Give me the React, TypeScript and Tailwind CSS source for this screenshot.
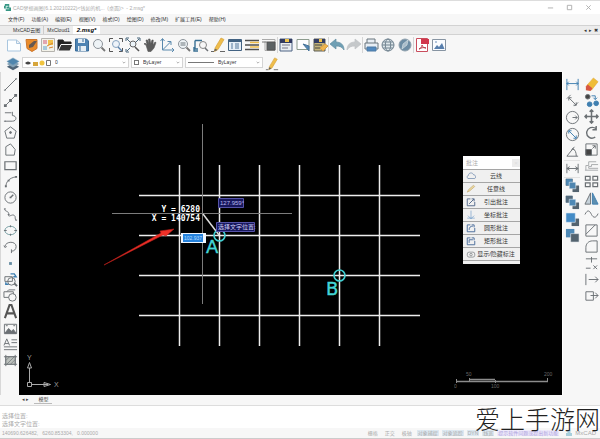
import React from "react";

type Icon = { name: string; art: React.ReactNode; sep?: boolean };

const G = "#6b7074";
const B = "#3f7fb0";

function Glyph({ children, size = "size-4" }: { children: React.ReactNode; size?: string }) {
  return (
    <svg viewBox="0 0 16 16" className={`${size} shrink-0`} fill="none" stroke={G} strokeWidth="1" aria-hidden="true">
      {children}
    </svg>
  );
}

const lens = (
  <>
    <circle cx="7" cy="7" r="4.500" fill="#eef3f6" stroke="#8b9299" />
    <path d="M10.500 10.500 14 14" stroke="#777" strokeWidth="1.800" />
  </>
);

const topIcons: Icon[] = [
  { name: "新建", art: <path d="M1.500 3h9l4 3.500V14h-13zM10.500 3v3.500h4" fill="#fcfeff" stroke="#a9c6df" /> },
  { name: "导入", art: <><path d="M3 2.500h11v9l-5 3-5-3z" fill="#e98b2a" stroke="#cd762c" /><path d="m6 8 5-4 3 0-4 6-4 1z" fill="#655850" stroke="none" /></> },
  { name: "云图", art: <><path d="M1.500 1.500h13v13h-13z" fill="#f3f2e9" stroke="#b5b3ae" /><path d="M3 3h4v4H3z" fill="#e2a6b0" stroke="none" /><path d="M8 3h5v5H8z" fill="#f2c14c" stroke="none" /><path d="M3 9h4v4H3z" fill="#a6c9dc" stroke="none" /><path d="m7 9 6-3M9 11l4-1" stroke="#d9872e" /></> },
  { name: "打开", art: <><path d="M1 13.500V3h5l1 2h7v3" fill="#222" stroke="#222" /><path d="M1 14 4 7.500h12L13 14z" fill="#333" stroke="#f7f7f7" /></> },
  { name: "保存", art: <><path d="M1.500 2h11l2 2v10h-13z" fill="#4d83b3" stroke="#396b98" /><path d="M4 2h7v4H4zM4 9h8v5H4z" fill="#e5eef5" stroke="none" /><path d="M6 9v5M9 2v3" stroke="#396b98" /></> },
  { name: "缩放", art: lens },
  { name: "窗口缩放", art: <><path d="M1.500 5V1.500H5M11 1.500h3.500V5M14.500 11v3.500H11M5 14.500H1.500V11" stroke="#555" /><circle cx="8" cy="7" r="3.500" stroke="#87a3c0" fill="#edf3fa" /><path d="m10 10 4 4" stroke="#5980ab" strokeWidth="1.500" /></> },
  { name: "范围缩放", art: <><path d="m2 2 3 3M14 2l-3 3M2 14l3-3M1 4V1h3M12 1h3v3M1 12v3h3" stroke="#48677c" /><circle cx="8" cy="7" r="3" fill="#edf5fa" stroke="#666" /><path d="m10 10 4 4" stroke="#555" strokeWidth="1.600" /></> },
  { name: "平移", art: <path d="M4 8 2 7l1-1 2 2L4 3h1.500L7 7l-.5-5H8l.7 5L10 3h1.200l-.2 5 2-3 1 .6-2 5.400-3 3.500H6z" fill="#5c5c5c" stroke="#555" strokeWidth=".6" /> },
  { name: "坐标", art: <path d="M3.500 2v11H15M3.500 13l8-8M1.500 4l2-2.500L5.500 4M13 11l2 2-2 2M8.500 4.500h3.500V8" stroke="#5a89ad" /> },
  { name: "实时缩放", art: <>{lens}<path d="M4.500 6h5M4.500 8h5" stroke="#6c777c" /></> },
  { name: "查找", art: <><path d="M2 3.500h7M2 3.500V12h3M1 10v4h4" stroke="#397094" strokeWidth="1.400" /><circle cx="10" cy="8" r="3.500" stroke="#888" /><path d="m12 11 3 3" strokeWidth="1.500" /></> },
  { name: "编辑", art: <><path d="m5 11 6-10 3 1.500-6 10-3.500 2z" fill="#efbd4b" stroke="#d5a23c" strokeWidth=".7" /><path d="m4.500 14 .5-2 2 1z" fill="#555" stroke="#666" strokeWidth=".5" /><path d="M1 14.500h3M10 14.500h5" stroke="#666" /></> },
  { name: "表格", art: <><path d="M1.500 2.500h13v11h-13z" fill="#e7eff8" stroke="#426282" /><path d="M2 4h12" stroke="#426282" strokeWidth="2" /><path d="M4 7h2M8 7h4M4 9h2M8 9h4M4 11h2M8 11h4" stroke="#55789c" /></> },
  { name: "线型", art: <><path d="M1 3.500h14M1 8h14M1 12.500h14" stroke="#4f4f4f" strokeWidth="1.400" /><path d="M6 5.500h9M6 10h9" stroke="#efbd4b" strokeWidth="1.500" /></> },
  { name: "图块", art: <><path d="M1 2.500h13v11H4v-9" stroke="#aaa" /><path d="M6 5h8v8H6z" fill="#5c6264" stroke="#555" /><path d="M1 5h5" stroke="#777" /></> },
  { name: "另存为", sep: true, art: <><path d="M2 2h12v12H2z" fill="#e9edf3" stroke="#4f6584" /><path d="M2 2h12v4H2z" fill="#333b61" stroke="none" /><path d="M7 2h4v3H7z" fill="#eec34d" stroke="none" /><path d="M4 8h8M4 11h6" stroke="#778" /></> },
  { name: "选择", art: <><path d="M2 2.500h12v10H2z" fill="#fff" stroke="#8c9b8d" /><path d="m8 7 6 7V9z" fill="#5388b4" stroke="#4a7599" /></> },
  { name: "批量", art: <><path d="M2 2h11v12H2z" fill="#c4b47b" stroke="#5e5e55" /><path d="M2 2h11v4H2z" fill="#343d63" stroke="none" /><path d="M7 2h3v3H7z" fill="#eec34d" stroke="none" /><path d="M3 8h7M3 11h6" stroke="#444" /><path d="m8 11 5-4 3 2-5 5z" fill="#f0b54d" stroke="#d29b48" /></> },
  { name: "撤销", sep: true, art: <path d="M1 7 7 2v3c5 0 8 3 8 8-2-3-4-4-8-4v3z" fill="#6f9fb4" stroke="#628ca0" strokeWidth=".7" /> },
  { name: "重做", art: <path d="M15 7 9 2v3c-5 0-8 3-8 8 2-3 4-4 8-4v3z" fill="#c5c8ca" stroke="#bfc2c4" strokeWidth=".7" /> },
  { name: "打印", sep: true, art: <><path d="M4 6V2h8v4M2 6h13v6H2z" fill="#e8eef4" stroke="#68747d" /><path d="M4 10h9v4H4z" fill="#5189bf" stroke="#4e7ba4" /></> },
  { name: "网络", art: <><circle cx="8" cy="8" r="6" fill="#dde6ea" stroke="#718390" /><ellipse cx="8" cy="8" rx="2.700" ry="6" stroke="#718390" /><path d="M2 8h12M3 5h10M3 11h10" stroke="#718390" /></> },
  { name: "导航", art: <><circle cx="8" cy="8" r="6" fill="#6d8da4" stroke="#91a2ae" /><path d="M5 12 6 7l5-4-1 5z" fill="#a9bdca" stroke="#dce5e9" strokeWidth=".6" /></> },
  { name: "PDF", sep: true, art: <><path d="M2.500 1.500h11v13h-11z" fill="#fff" stroke="#c94d5d" /><path d="M7 2h8v5H7z" fill="#d1364b" stroke="none" /><path d="M5 12c3-1 3-4 3-4 0 2 3 3 4 3-3-1-5 0-7 1Z" stroke="#b83c49" /></> },
  { name: "图片", art: <><path d="M1.500 2.500h13v11h-13z" fill="#fafcff" stroke="#8794a2" /><path d="m3 12 3-4 2 2 3-4 2.500 6z" fill="#587fad" stroke="none" /><circle cx="5" cy="5" r=".8" fill="#587fad" stroke="none" /></> },
];

const leftIcons: Icon[] = [
  { name: "直线", art: <path d="M2 14 14 2M1 14h2M13 2h2" /> },
  { name: "构造线", art: <><path d="M2 14 14 2" /><path d="M1 12h3v3H1zM6.500 6.500h3v3h-3zM12 1h3v3h-3z" fill={G} stroke="none" /></> },
  { name: "多段线", art: <path d="M2 4h7M2 13h8c5 0 5-6 0-6V3M1 13h2" /> },
  { name: "正多边形", art: <><path d="m8 2 6 4.500-2 7.500H4L2 6.500z" /><circle cx="8" cy="8" r="1" fill={G} /></> },
  { name: "多边形", art: <path d="M3 14V5l5-3 5 6-1 6z" /> },
  { name: "矩形", art: <path d="M2 4h12v8.500H2z" strokeWidth="1.300" /> },
  { name: "圆弧", art: <><path d="M3 14C3 8 7 4 14 3" /><path d="M2 12h2v2H2zM5 6h2v2H5zM13 2h2v2h-2z" fill={G} stroke="none" /></> },
  { name: "圆", art: <><circle cx="8" cy="8" r="6" /><path d="m8 8 3-3M7 8h2" strokeWidth="1.500" /></> },
  { name: "样条", art: <path d="M2 2c-1 3 5 2 4 6s4-1 6 1c2 1 0 4 2 5M1 2h2M5 8h2M13 14h2" /> },
  { name: "椭圆", art: <><ellipse cx="8" cy="8" rx="6" ry="4.500" stroke="#719a9f" /><path d="M1 8h3M12 8h3M8 2.500v2M8 11.500v2" /></> },
  { name: "椭圆弧", art: <path d="M2 8c1-6 12-6 12 0 0 3-2 5-5 5M1 7l1 2 2-1M9 11v4" /> },
  { name: "点", art: <path d="M6.500 6.500h3v3h-3z" fill="#638aa0" stroke="none" /> },
  { name: "插入块", art: <><path d="M2 5h8v5H2z" /><circle cx="9" cy="10" r="4" /><path d="M8 2h4l2 3h-3M3 11v2h3" stroke={B} strokeWidth="1.500" /><path d="m12 12 3 3" strokeWidth="2" /></> },
  { name: "创建块", art: <><path d="M1 4h10v6H1zM4 4l2-2h7" /><circle cx="10" cy="10" r="4" fill="#f7f7f7" /></> },
  { name: "文字", art: <path d="M2 15 7 1h2l5 14M4 10h8" strokeWidth="2.200" stroke="#555" /> },
  { name: "图像", art: <><path d="M1.500 3.500h13v10h-13z" /><path d="m2 13 4-5 3 3 2-2 3 4z" fill={G} /><path d="M3 5h2M11 5h2" /></> },
  { name: "多行文字", art: <path d="m1 9 3-7 3 7M2 7h4M9 3h6M9 6h6M1 10.500h14M1 13.500h14" /> },
  { name: "填充", art: <><path d="M3 2v12M13 2v12M1 4h14M1 12h14" /><path d="M3 4h10v8H3z" fill="#bbc0bc" /><path d="m4 12 8-8M8 12l5-5M3 8l4-4" strokeWidth=".7" /></> },
];

const layers = (back: string, front: string) => (
  <>
    <path d="M1 1h7v7H1z" fill={back} stroke="#4f6b80" strokeWidth=".6" />
    <path d="M8 8h7v7H8z" fill="#53636f" stroke="none" />
    <path d="M4.500 4.500h7v7h-7z" fill={front} stroke="#f0f5f8" strokeWidth=".6" />
  </>
);

const dimIcons: Icon[] = [
  { name: "线性标注", art: <path d="M2 2v12M14 2v12M2 7h12M4 5 2 7l2 2M12 5l2 2-2 2" stroke={B} /> },
  { name: "对齐标注", art: <path d="m2 6 4-4M10 14l4-4M4 5l8 8M4 8V5h3M9 13h3v-3" /> },
  { name: "半径标注", art: <><circle cx="8" cy="8" r="6.500" /><path d="M8 8h5M11 6l2 2-2 2" /></> },
  { name: "直径标注", art: <><circle cx="8" cy="8" r="6.500" /><path d="m4 4 8 8M4 7V4h3M9 12h3V9" stroke={B} /></> },
  { name: "角度标注", art: <path d="M14 13H2l8-10M8 5c3 1 4 4 4 8M7 7l1-2 2 1" /> },
  { name: "连续标注", sep: true, art: <path d="M2 3v10M14 3v10M2 8h12M5 6 2 8l3 2M11 6l3 2-3 2" /> },
  { name: "前置", sep: true, art: layers("#4e89b6", "#4f86b0") },
  { name: "后置", art: layers("#52697b", "#4e89b6") },
  { name: "置于对象之上", art: <><path d="M7 7h8v8H7z" fill="#53636f" stroke="none" /><path d="M1 1h10v10H1z" fill="#438bc6" stroke="#f0f5f8" strokeWidth=".6" /></> },
  { name: "置于对象之下", art: <><path d="M1 1h9v9H1z" fill="#4e89b6" stroke="none" /><path d="M6 6h9v9H6z" fill="#53636f" stroke="#f0f5f8" strokeWidth=".6" /></> },
];

const modifyIcons: Icon[] = [
  { name: "删除", art: <><path d="m3 9 7-8 5 4-7 9z" fill="#efbd37" stroke="#e0a83a" strokeWidth=".6" /><path d="m2 10 2-2 5 4-2 3-5-1z" fill="#d75743" stroke="none" /></> },
  { name: "复制", art: <><circle cx="4" cy="4" r="2.500" fill="#444" /><circle cx="6" cy="12" r="2.500" fill={B} stroke={B} /><circle cx="13" cy="11" r="2.500" fill={B} stroke={B} /><path d="M8 3h4v4M10 5l2 2 2-2" stroke={B} /></> },
  { name: "移动", art: <path d="M8 1v14M1 8h14M6 3l2-2 2 2M6 13l2 2 2-2M3 6 1 8l2 2M13 6l2 2-2 2" strokeWidth="1.600" /> },
  { name: "旋转", art: <path d="M12 13c-5 3-10-1-9-6 1-4 6-6 10-3M13 1v4H9" strokeWidth="1.500" /> },
  { name: "缩放对象", art: <><path d="M2 2h12v12H2z" /><path d="M2 8h6v6H2z" fill="#444" /><path d="m9 7 3-3M9 4h3v3" /></> },
  { name: "偏移", art: <path d="M2 13V8h3V4h8M1 13h14M5 11V9h3V7h7M5 11h10" stroke="#a6aaac" /> },
  { name: "阵列", art: <path d="M1.500 2.500h5v4h-5zM9.500 2.500h5v4h-5zM1.500 9.500h5v4h-5zM9.500 9.500h5v4h-5z" strokeWidth="1.300" /> },
  { name: "镜像", art: <><path d="M7 2v12H1z" fill="#c6d2da" /><path d="M9 2v12h6z" fill="#5d8eaf" stroke={B} /></> },
  { name: "打断", art: <path d="M1 8c3-6 5-4 7 0s5 4 7-1" /> },
  { name: "倒角", art: <path d="M2 2h12v12H2zM2 12 12 2" /> },
  { name: "圆角", art: <path d="M2 14V9c0-4 3-7 7-7h5v12z" /> },
  { name: "修剪", art: <path d="M2 3h12M8 1v6M2 13h5M10 10l4 4M14 10l-4 4" /> },
  { name: "延伸", art: <path d="M2 2v12M5 8h10M12 5l3 3-3 3" /> },
  { name: "拉伸", art: <><path d="M2 4h8v9H2zM7 8h8" /><path d="m12 5 3 3-3 3" /></> },
];

const panelItems: Icon[] = [
  { name: "云线", art: <path d="M3 12c-2-2-1-5 1-5 0-5 7-5 8-1 4 0 4 5 2 6z" stroke="#5878a2" /> },
  { name: "任意线", art: <path d="m2 13 2-4 8-7 2 2-8 7z" fill="#eed99c" stroke="#bba575" /> },
  { name: "引出批注", art: <path d="M7 3H2v11h12V8M5 11l8-8M9 3h4v4" stroke="#53698b" strokeWidth="1.500" /> },
  { name: "坐标批注", art: <path d="M8 1v13M3 9l5 5 5-5M2 13h12" stroke="#6a97c7" /> },
  { name: "圆形批注", art: <path d="M7 3H2v11h12V8M5 11c0-4 2-6 6-6M9 3h4v4" stroke="#476b9b" strokeWidth="1.500" /> },
  { name: "矩形批注", art: <path d="M7 3H2v11h12V8M5 11V6h6M9 3h4v4" stroke="#476b9b" strokeWidth="1.500" /> },
  { name: "显示/隐藏标注", art: <><rect x="2" y="5" width="12" height="8" rx="3" /><circle cx="8" cy="9" r="2" /></> },
];

function ToolColumn({ icons, label, extent }: { icons: Icon[]; label: string; extent: string }) {
  return (
    <div role="toolbar" aria-label={label} className={`flex w-4 flex-col justify-between ${extent}`}>
      {icons.map((i) => (
        <button key={i.name} aria-label={i.name} className={`flex h-4 w-4 items-center justify-center ${i.sep ? "border-t border-[#e2e2e2]" : ""}`}>
          <Glyph size="size-[15px]">{i.art}</Glyph>
        </button>
      ))}
    </div>
  );
}

function Picker({ label, value, width, before }: { label: string; value: string; width: string; before: React.ReactNode }) {
  return (
    <label className={`flex h-[11px] items-center gap-1 border border-[#d4d4d4] bg-white px-[2px] ${width}`}>
      {before}
      <select aria-label={label} className="h-[9px] min-w-0 flex-1 appearance-none bg-transparent text-[5px] leading-[9px] text-[#333] outline-none">
        <option>{value}</option>
      </select>
      <svg viewBox="0 0 6 4" className="h-[3px] w-1" fill="none" stroke="#888" aria-hidden="true"><path d="m1 1 2 2 2-2" /></svg>
    </label>
  );
}

function Drawing() {
  const columns = [179, 219, 259, 299, 339, 379];
  const rows = [195, 235, 275, 315];
  return (
    <svg viewBox="19 72 543 323" className="block h-[323px] w-[543px] max-w-none" fill="none" role="img" aria-label="图纸">
      <g stroke="#ededed" strokeWidth="1.500">
        {columns.map((x) => <path key={x} d={`M${x + 0.5} 165V346`} />)}
        {rows.map((y) => <path key={y} d={`M139 ${y + 0.5}H420`} />)}
      </g>
      <path d="M202.500 124V304M112 213.500H292" stroke="#7c7c7c" />
      <path d="m203 214 16 21" stroke="#ddd" strokeWidth="1.500" />
      <g stroke="#41cfd2" strokeWidth="1.600">
        <circle cx="219.500" cy="235.500" r="5.500" />
        <circle cx="339.500" cy="275.500" r="5.500" />
      </g>
      <g fill="#43d5d5" stroke="#43d5d5" strokeWidth=".4" className="font-['DejaVu_Sans'] text-[18px]">
        <text x="206" y="253">A</text>
        <text x="326" y="295">B</text>
      </g>
      <g fill="#fff" textAnchor="end" className="font-['DejaVu_Sans_Mono'] text-[8px] font-bold">
        <text x="200" y="212" xmlSpace="preserve">Y = 6280</text>
        <text x="200" y="221" xmlSpace="preserve">X = 140754</text>
      </g>
      <path d="M104 265 161 233l-1-2 14-2-8 7-3-1z" fill="#ef3028" stroke="#b8201b" strokeWidth=".6" />
      <g className="font-['Liberation_Sans','Noto_Sans_CJK_SC',sans-serif] text-[6px]">
        <path d="M218.500 198.500h25v9h-25zM216.500 222.500h38v9h-38z" fill="#17175c" stroke="#5553a8" />
        <text x="220" y="205" fill="#b9b8ee">127.959°</text>
        <text x="218" y="229" fill="#d0cff5">选择文字位置:</text>
        <path d="M181 233h25v10h-25z" fill="#f1f7ff" />
        <path d="M183 234h20v8h-20z" fill="#2582dc" />
        <text x="184" y="240" fill="#b8dcff" className="text-[5px]">102.937</text>
      </g>
    </svg>
  );
}

function MarkupPanel() {
  return (
    <section className="absolute right-[42px] top-[84px] w-[57px] bg-[#f0f0f0] text-[6px] text-[#333]">
      <header className="flex h-[13px] items-center justify-between bg-white pl-[3px] text-[#aaa]">
        批注
        <button aria-label="关闭" className="size-2 bg-[#ececec] leading-[8px] text-[#ddd]">×</button>
      </header>
      {panelItems.map((i) => (
        <button key={i.name} className="flex h-[13px] w-full items-center border-t border-[#a5a5a5] pl-[3px] pr-1 leading-[12px]">
          <Glyph size="size-[10px]">{i.art}</Glyph>
          <span className="flex-1 whitespace-nowrap text-center">{i.name}</span>
        </button>
      ))}
      <div className="h-1 border-t border-[#a5a5a5]" />
    </section>
  );
}

const menus = ["文件(F)", "功能(A)", "编辑(E)", "视图(V)", "格式(O)", "绘图(D)", "修改(M)", "扩展工具(E)", "帮助(H)"];

export default function App() {
  return (
    <div className="relative flex h-screen flex-col overflow-hidden bg-[#f7f7f7] font-['Liberation_Sans','Noto_Sans_CJK_SC',sans-serif] text-[6px] leading-[8px] text-[#333]">
      <header className="flex h-[14px] shrink-0 items-center border-t border-[#ddd] bg-white pl-1 pr-2 text-[5px] text-[#aaa]">
        <svg viewBox="0 0 8 8" className="mr-[2px] size-[7px]" aria-hidden="true"><path d="M1 0h5v4h2v4H2V5H0V2h1z" fill="#359684" /><path d="M2 2h3v1H3v2h3v1H2z" fill="#d5eee8" /></svg>
        <h1 className="flex-1 whitespace-pre">CAD梦想画图(6.1.20210222)&lt;钱如的机...  (桌面)&gt;  - 2.msg*</h1>
        <div className="flex gap-3">
          {["M1 4.500h6", "M1.500 1.500h5v5h-5z", "m1.500 1.500 5 5m0-5-5 5"].map((d, n) => (
            <button key={d} aria-label={["最小化", "最大化", "关闭"][n]}>
              <svg viewBox="0 0 8 8" className="size-[7px]" fill="none" stroke="#aaa"><path d={d} /></svg>
            </button>
          ))}
        </div>
      </header>

      <nav className="flex h-[11px] shrink-0 items-start gap-[7px] pl-2 pt-px text-[5px]">
        {menus.map((m) => <button key={m} className="whitespace-nowrap">{m}</button>)}
      </nav>

      <div role="tablist" className="flex h-[10px] shrink-0 items-stretch border-y border-[#d2d2d2] bg-[#ececec] pl-[10px] text-[6px] leading-[8px]">
        <button role="tab" className="px-[3px] text-[5px]">MxCAD云图</button>
        <button role="tab" className="border-l border-[#ccc] px-[3px] text-[5px]">MxCloud1</button>
        <button role="tab" aria-selected="true" className="bg-white px-1 font-bold italic text-black">2.msg*</button>
        <div className="ml-auto flex items-center gap-[2px] pr-[2px] text-[5px]">
          <button aria-label="上一页">◂</button><button aria-label="下一页">▸</button><button aria-label="关闭标签">✖</button>
        </div>
      </div>

      <div role="toolbar" aria-label="标准" className="flex h-[20px] shrink-0 items-center pl-[5px]">
        {topIcons.map((i) => (
          <button key={i.name} aria-label={i.name} className={`flex h-4 w-[17px] items-center justify-center border-l ${i.sep ? "border-[#d5d5d5]" : "border-transparent"}`}>
            <Glyph>{i.art}</Glyph>
          </button>
        ))}
      </div>

      <div className="flex h-[17px] shrink-0 items-start gap-[2px] pl-[6px] pt-[2px]">
        <button aria-label="图层管理"><Glyph size="size-[14px]"><path d="m1 11 7-4 7 4-7 4z" fill="#4f6477" stroke="none" /><path d="m1 8 7-4 7 4-7 4z" fill="#83a2b7" stroke="none" /><path d="m1 5 7-4 7 4-7 4z" fill="#4f86ae" stroke="#7199b5" strokeWidth=".5" /></Glyph></button>
        <Picker label="图层" value="0" width="w-[107px]" before={
          <svg viewBox="0 0 26 8" className="h-2 w-[26px] shrink-0" aria-hidden="true"><path d="M0 4q3-3 6 0-3 3-6 0" fill="#444" /><path d="M8 3h5v4H8z" fill="#d7a63c" /><circle cx="17" cy="4" r="2.500" fill="#f0c43f" /><path d="M21.500 1.500h4v5h-4z" fill="white" stroke="#777" /></svg>
        } />
        <Picker label="颜色" value="ByLayer" width="w-[52px]" before={<span className="size-[5px] shrink-0 border border-[#777]" />} />
        <Picker label="线型" value="ByLayer" width="w-[78px]" before={<span className="h-px w-[26px] shrink-0 bg-[#777]" />} />
        <button aria-label="特性编辑"><Glyph size="size-[14px]">{topIcons[12].art}</Glyph></button>
      </div>

      <main className="flex min-h-0 flex-1 border-l border-[#d8d8d8]">
        <aside className="flex w-[18px] shrink-0 justify-center pt-1">
          <ToolColumn icons={leftIcons} label="绘图" extent="h-[293px]" />
        </aside>
        <div className="relative min-w-0 flex-1 overflow-hidden bg-black">
          <Drawing />
          <MarkupPanel />
          <svg viewBox="0 0 40 40" className="absolute bottom-0 left-2 size-10" fill="none" stroke="#aaa" aria-hidden="true">
            <path d="M2.500 27.500V13M5 29.500h16M.5 27.500h4v4h-4zM2.500 7.500.5 13h4zM23.500 29.500 17 27.500v4z" />
            <g fill="#999" stroke="none" className="text-[7px]"><text x="0" y="5">Y</text><text x="27" y="32">X</text></g>
          </svg>
          <svg viewBox="0 0 104 22" className="absolute bottom-1 right-1 h-[22px] w-[104px]" fill="none" stroke="#8c8c8c" aria-hidden="true">
            <path d="M2 12.500h92M15 10.500h26" strokeWidth="1.500" /><path d="M2.500 10v4M15.500 9v4M41.500 11v3M93.500 9v4" />
            <g fill="#686868" stroke="none" className="text-[5px]"><text x="0" y="19">0</text><text x="12" y="7">50</text><text x="37" y="19">100</text><text x="90" y="7">200</text></g>
          </svg>
        </div>
        <aside className="flex w-[38px] shrink-0 gap-[3px] border-l border-white pl-px pt-1">
          <ToolColumn icons={dimIcons} label="标注" extent="h-[168px]" />
          <ToolColumn icons={modifyIcons} label="修改" extent="h-[228px]" />
        </aside>
      </main>

      <div className="flex h-[10px] shrink-0 items-start pl-[22px] text-[5px] text-[#444]">
        <span>◂ ▸</span>
        <button className="ml-[5px] border-b border-[#bbb] px-1">模型</button>
      </div>

      <footer className="shrink-0 border-t border-[#ddd] bg-white text-[#aaa]">
        <div className="h-[22px] pl-[2px] pt-[6px] text-[6px] leading-[8px]">
          <p>选择位置:</p>
          <p>选择文字位置:</p>
        </div>
        <div className="flex h-[11px] items-center border-b border-[#ccc] bg-[#f7f7f7] pl-[2px] pr-1 text-[5px] leading-[6px]">
          <output className="flex-1 whitespace-pre">140690.626482,   6260.853304,   0.000000</output>
          <div className="flex items-center gap-[3px]">
            <button className="mr-1">栅格</button><button className="mr-1">正交</button><button className="mr-[2px]">极轴</button>
            <button className="bg-[#dce8f1] px-px">对象捕捉</button><button className="bg-[#dce8f1] px-px">对象追踪</button>
            <button className="bg-[#dce8f1] px-px">DYN</button><button className="bg-[#dce8f1] px-px">线宽</button>
            <a href="#feedback" className="bg-[#eeeafa] px-px text-[#aba0dd]">提示软件问题或提出新功能</a>
            <svg viewBox="0 0 8 8" className="ml-1 size-[6px]" aria-hidden="true"><path d="M2 0h4v4h2v4H0V4h2z" fill="#a8cfdc" /></svg>
            <span className="text-[6px]">MxCAD</span>
          </div>
        </div>
      </footer>

      <p className="pointer-events-none absolute bottom-2 right-0 font-['Noto_Sans_CJK_SC',sans-serif] text-[25px] font-light leading-[26px] text-[#222]">爱上手游网</p>
    </div>
  );
}
